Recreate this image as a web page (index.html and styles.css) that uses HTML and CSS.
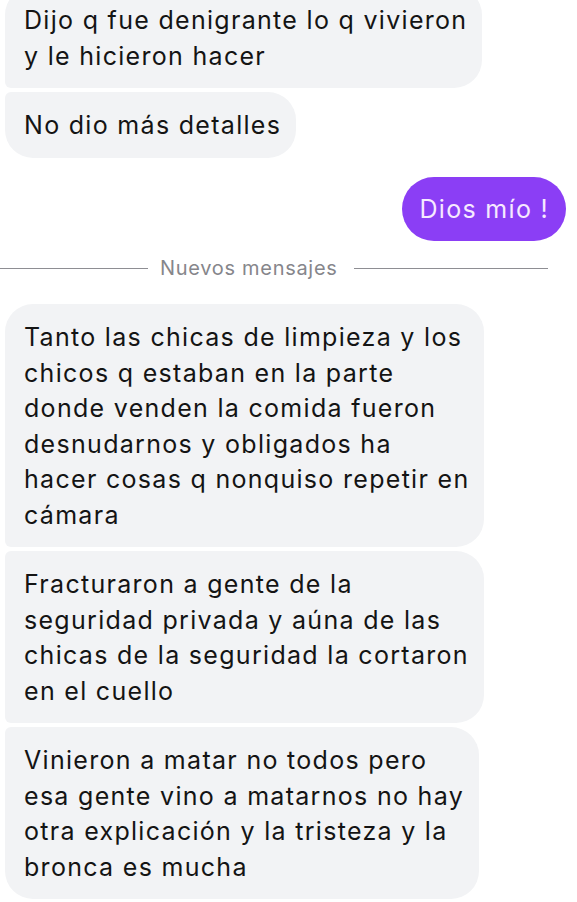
FILE: index.html
```html
<!DOCTYPE html>
<html lang="es">
<head>
    <meta charset="UTF-8">
    <meta name="viewport" content="width=device-width, initial-scale=1.0">
    <title>Chat</title>
    <link rel="stylesheet" href="styles.css">
</head>
<body>
    <div class="chat">
        <div class="group">
            <div class="bubble first">Dijo q fue denigrante lo q vivieron<br>y le hicieron hacer</div>
            <div class="bubble last">No dio más detalles</div>
        </div>

        <div class="group mine">
            <div class="bubble sent">Dios mío !</div>
        </div>

        <div class="divider">
            <span class="line"></span>
            <span class="label">Nuevos mensajes</span>
            <span class="line right"></span>
        </div>

        <div class="group">
            <div class="bubble first">Tanto las chicas de limpieza y los<br>chicos q estaban en la parte<br>donde venden la comida fueron<br>desnudarnos y obligados ha<br>hacer cosas q nonquiso repetir en<br>cámara</div>
            <div class="bubble">Fracturaron a gente de la<br>seguridad privada y aúna de las<br>chicas de la seguridad la cortaron<br>en el cuello</div>
            <div class="bubble last">Vinieron a matar no todos pero<br>esa gente vino a matarnos no hay<br>otra explicación y la tristeza y la<br>bronca es mucha</div>
        </div>
    </div>
</body>
</html>
```

FILE: styles.css
```css
body {
    margin: 0;
    background: #ffffff;
    font-family: Inter, "Noto Sans", sans-serif;
    color: #141414;
    overflow: hidden;
}
.chat {
    padding: 0 11px 0 5px;
    margin-top: -13px;
}
.group {
    display: flex;
    flex-direction: column;
    align-items: flex-start;
    gap: 4px;
}
.group.mine {
    align-items: flex-end;
    margin-top: 19px;
}
.bubble {
    background: #f2f3f5;
    font-size: 25px;
    letter-spacing: 1.3px;
    line-height: 35.5px;
    padding: 16px 15px 14px 19px;
    border-radius: 6px 28px 28px 6px;
}
.bubble.first {
    border-top-left-radius: 28px;
}
.bubble.last {
    border-bottom-left-radius: 28px;
}
.bubble.sent {
    background: #8b3ef5;
    color: #f6e9ff;
    padding: 15px 17px 14px 18px;
    border-radius: 32px;
}
.divider {
    display: flex;
    align-items: center;
    margin: 14px 18px 23px -5px;
}
.divider .line {
    height: 1px;
    background: #8e8e93;
    flex: 0 0 148px;
}
.divider .line.right {
    flex: 1;
}
.divider .label {
    font-size: 20px;
    letter-spacing: 0.7px;
    color: #86868b;
    padding: 0 16px 0 12px;
    line-height: 26px;
}
```
